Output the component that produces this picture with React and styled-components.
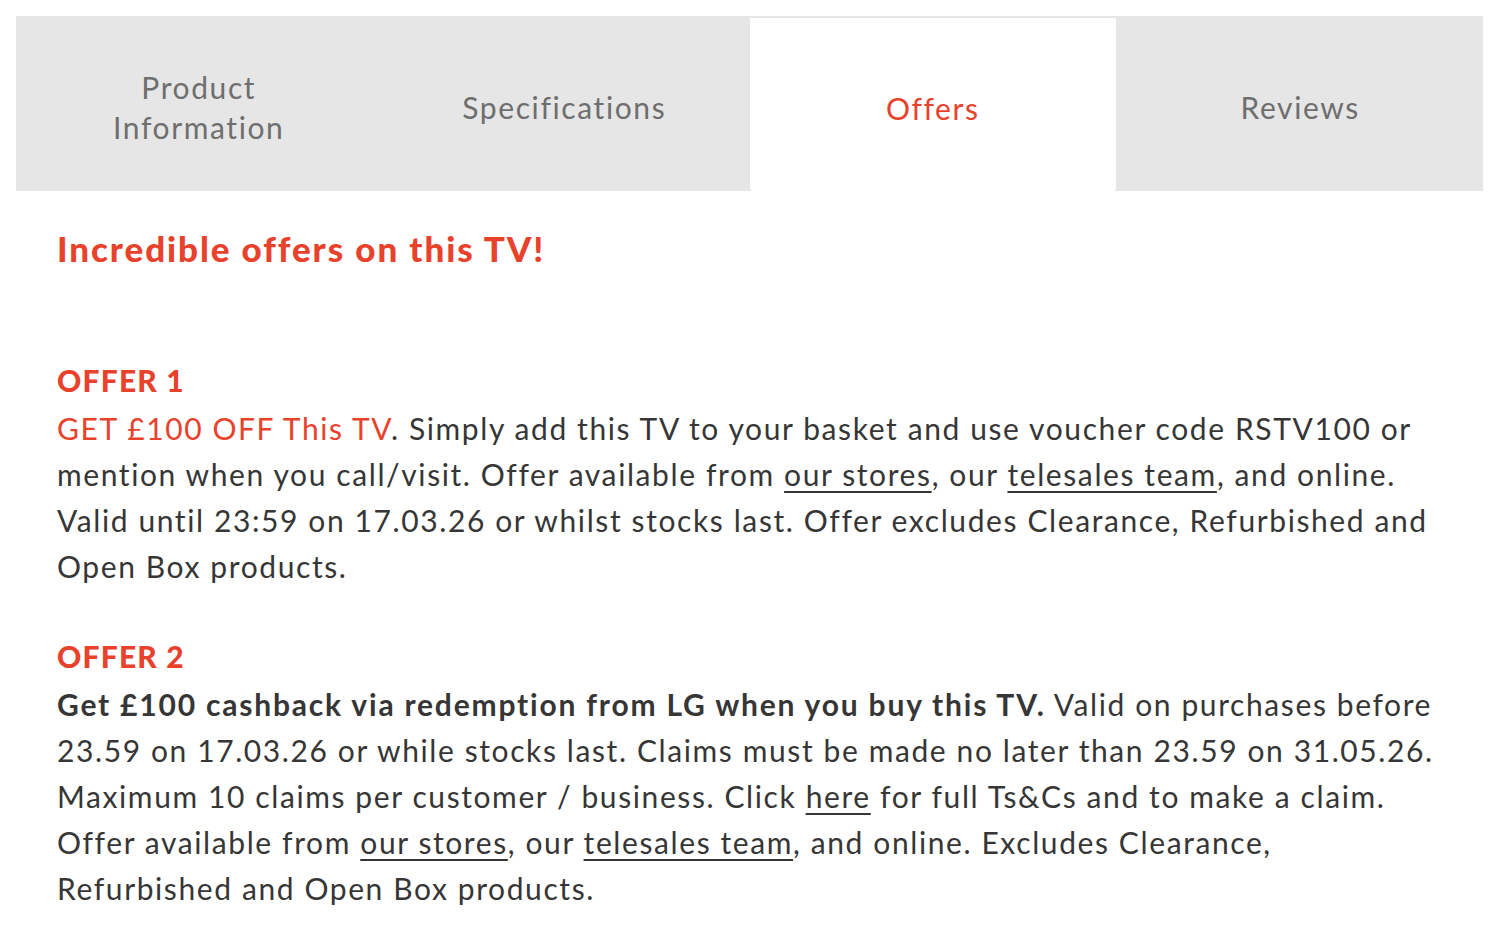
import React from "react";
import styled, { createGlobalStyle } from "styled-components";

const GlobalStyle = createGlobalStyle`
  body {
    margin: 0;
    background: #fff;
    font-family: Lato, "Open Sans", sans-serif;
  }
`;

const Page = styled.div`
  padding: 16px 15px 0 16px;
`;

const TabBar = styled.ul`
  list-style: none;
  margin: 0;
  padding: 0;
  display: flex;
  background: #e6e6e6;
  height: 175px;
`;

const Tab = styled.li`
  flex: 1;
  display: flex;
  align-items: center;
  justify-content: center;
  text-align: center;
  font-size: 30px;
  line-height: 40px;
  letter-spacing: 1.6px;
  padding-top: 6px;
  color: ${(p) => (p.$active ? "#e8412c" : "#6e6e6e")};
  background: ${(p) => (p.$active ? "#fff" : "transparent")};
  margin: ${(p) => (p.$active ? "2px 2px 0 3px" : "0")};
  border-radius: ${(p) => (p.$active ? "0 0 3px 3px" : "0")};
`;

const Content = styled.div`
  padding: 36px 41px 0;
  color: #363636;
`;

const Heading = styled.h2`
  margin: 0 0 86px;
  font-size: 35px;
  font-weight: 900;
  letter-spacing: 1.9px;
  color: #e8412c;
`;

const Offer = styled.section`
  margin-bottom: 42px;
`;

const OfferTitle = styled.h3`
  margin: 0;
  font-size: 30px;
  line-height: 50px;
  font-weight: 900;
  letter-spacing: 1.2px;
  color: #e8412c;
`;

const Text = styled.p`
  margin: 0;
  font-size: 30px;
  line-height: 46px;
  letter-spacing: 1.6px;
  white-space: nowrap;
`;

const Red = styled.span`
  color: #e8412c;
`;

const Strong = styled.strong`
  font-weight: 700;
  letter-spacing: 1.8px;
`;

const Link = styled.a`
  color: inherit;
  text-decoration: underline;
  text-decoration-thickness: 2px;
  text-underline-offset: 5px;
`;

const tabs = ["Product\nInformation", "Specifications", "Offers", "Reviews"];

export default function App() {
  return (
    <Page>
      <GlobalStyle />
      <TabBar>
        {tabs.map((t) => (
          <Tab key={t} $active={t === "Offers"}>
            <span>
              {t.split("\n").map((l, i) => (
                <React.Fragment key={l}>
                  {i > 0 && <br />}
                  {l}
                </React.Fragment>
              ))}
            </span>
          </Tab>
        ))}
      </TabBar>
      <Content>
        <Heading>Incredible offers on this TV!</Heading>
        <Offer>
          <OfferTitle>OFFER 1</OfferTitle>
          <Text>
            <Red>GET £100 OFF This TV</Red>. Simply add this TV to your basket and use voucher code RSTV100 or
            <br />
            mention when you call/visit. Offer available from <Link href="#">our stores</Link>, our{" "}
            <Link href="#">telesales team</Link>, and online.
            <br />
            Valid until 23:59 on 17.03.26 or whilst stocks last. Offer excludes Clearance, Refurbished and
            <br />
            Open Box products.
          </Text>
        </Offer>
        <Offer>
          <OfferTitle>OFFER 2</OfferTitle>
          <Text>
            <Strong>Get £100 cashback via redemption from LG when you buy this TV.</Strong> Valid on purchases before
            <br />
            23.59 on 17.03.26 or while stocks last. Claims must be made no later than 23.59 on 31.05.26.
            <br />
            Maximum 10 claims per customer / business. Click <Link href="#">here</Link> for full Ts&amp;Cs and to make a claim.
            <br />
            Offer available from <Link href="#">our stores</Link>, our <Link href="#">telesales team</Link>, and online. Excludes Clearance,
            <br />
            Refurbished and Open Box products.
          </Text>
        </Offer>
      </Content>
    </Page>
  );
}
